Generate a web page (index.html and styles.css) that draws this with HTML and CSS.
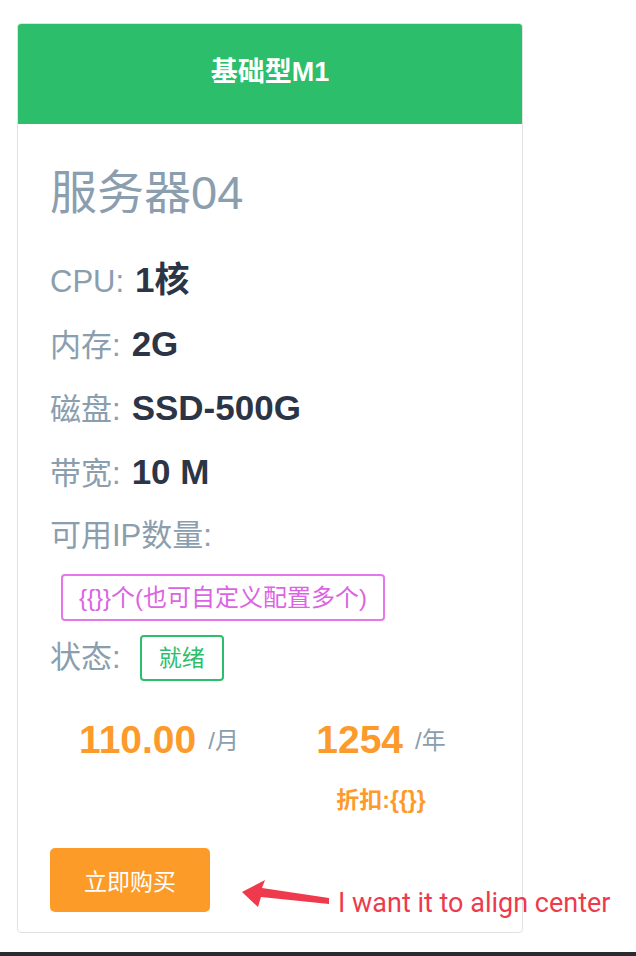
FILE: index.html
```html
<!DOCTYPE html>
<html lang="zh">
<head>
<meta charset="utf-8">
<title>基础型M1</title>
<link rel="stylesheet" href="styles.css">
</head>
<body>
<div class="page">
  <div class="card">
    <div class="card-header">基础型M1</div>
    <div class="card-body">
      <div class="title">服务器04</div>
      <div class="specs">
        <div class="row"><span class="label">CPU:</span><span class="value">1核</span></div>
        <div class="row"><span class="label">内存:</span><span class="value">2G</span></div>
        <div class="row"><span class="label">磁盘:</span><span class="value">SSD-500G</span></div>
        <div class="row"><span class="label">带宽:</span><span class="value">10 M</span></div>
        <div class="row"><span class="label">可用IP数量:</span></div>
      </div>
      <div class="ip-wrap"><span class="tag tag-pink">{{}}个(也可自定义配置多个)</span></div>
      <div class="row status-row"><span class="label">状态:</span><span class="tag tag-green">就绪</span></div>
      <div class="prices">
        <div class="price-col">
          <div class="price"><span class="amount">110.00</span><span class="unit">/月</span></div>
        </div>
        <div class="price-col">
          <div class="price"><span class="amount">1254</span><span class="unit">/年</span></div>
          <div class="discount">折扣:{{}}</div>
        </div>
      </div>
      <button class="buy">立即购买</button>
    </div>
  </div>
  <svg class="arrow" width="100" height="40" viewBox="236 874 100 40">
    <polygon points="242,892 265,880 262,888 329,898 329,904 261,897 258,907" fill="#ef3a4e"/>
  </svg>
  <div class="note">I want it to align center</div>
</div>
<div class="dock"></div>
</body>
</html>
```
FILE: styles.css
```css
html, body {
  margin: 0;
  padding: 0;
  background: #fff;
}
body {
  font-family: "Liberation Sans", "Noto Sans CJK SC", sans-serif;
  width: 636px;
  height: 956px;
  overflow: hidden;
}
.page {
  position: relative;
  padding: 23px 0 0 17px;
  height: 952px;
  box-sizing: border-box;
}
.card {
  width: 506px;
  box-sizing: border-box;
  border: 1px solid #e2e2e2;
  border-radius: 4px;
  overflow: hidden;
  background: #fff;
}
.card-header {
  height: 100px;
  line-height: 96px;
  background: #2dbe6c;
  color: #fff;
  text-align: center;
  font-size: 27px;
  font-weight: bold;
}
.card-body {
  padding: 0 32px 20px 32px;
}
.title {
  margin-top: 37px;
  height: 64px;
  line-height: 64px;
  font-size: 47px;
  color: #8a9eae;
}
.specs {
  margin-top: 23px;
}
.row {
  height: 64px;
  line-height: 64px;
  white-space: nowrap;
}
.label {
  font-size: 31px;
  color: #8a9eae;
}
.value {
  margin-left: 11px;
  font-size: 35px;
  font-weight: bold;
  color: #2c3546;
}
.ip-wrap {
  margin: 6px 0 0 11px;
  height: 47px;
}
.tag {
  display: inline-block;
  box-sizing: border-box;
  border-radius: 4px;
  border: 2px solid;
}
.tag-pink {
  height: 47px;
  line-height: 43px;
  padding: 0 16px;
  font-size: 24px;
  color: #db64e3;
  border-color: #e677ea;
}
.status-row {
  margin-top: 5px;
  display: flex;
  align-items: center;
}
.tag-green {
  height: 46px;
  line-height: 42px;
  padding: 0 17px;
  margin-left: 19px;
  font-size: 23px;
  color: #2dbe6c;
  border-color: #2dbe6c;
}
.prices {
  margin: 25px 0 0 -2px;
  display: grid;
  grid-template-columns: 222px 222px;
  text-align: center;
}
.price {
  height: 50px;
  line-height: 50px;
  white-space: nowrap;
}
.amount {
  font-size: 39px;
  font-weight: bold;
  color: #fd9a2c;
}
.unit {
  font-size: 24px;
  color: #8a9eae;
  margin-left: 12px;
  vertical-align: 4px;
}
.discount {
  margin-top: 20px;
  height: 30px;
  line-height: 30px;
  font-size: 23px;
  font-weight: bold;
  color: #fd9a2c;
}
.buy {
  display: block;
  margin-top: 33px;
  width: 160px;
  height: 64px;
  border: none;
  border-radius: 5px;
  background: #fd9b29;
  color: #fff;
  font-family: "Noto Sans CJK SC", sans-serif;
  font-size: 23px;
  padding: 0;
}
.arrow {
  position: absolute;
  left: 236px;
  top: 874px;
}
.note {
  position: absolute;
  left: 338px;
  top: 885px;
  font-family: Roboto, "Liberation Sans", sans-serif;
  font-size: 27px;
  line-height: 36px;
  color: #ee3a4d;
  white-space: nowrap;
}
.dock {
  height: 4px;
  background: #2b2b2f;
}
```
